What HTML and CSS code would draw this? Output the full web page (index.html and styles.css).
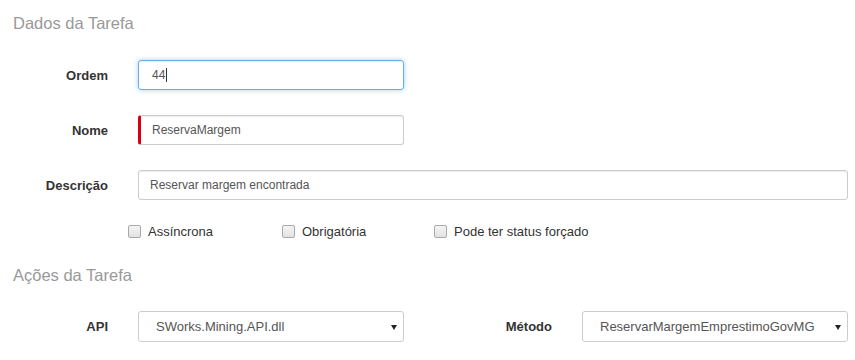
FILE: index.html
```html
<!DOCTYPE html>
<html lang="pt-BR">
<head>
  <meta charset="UTF-8" />
  <title>Tarefa</title>
  <link rel="stylesheet" href="styles.css">
</head>
<body>
  <form class="task-form">
    <h4 class="section-title">Dados da Tarefa</h4>

    <div class="form-row first">
      <label class="field-label" for="ordem">Ordem</label>
      <div class="field-box short focused" id="ordem">
        <span class="field-text">44</span><span class="caret"></span>
      </div>
    </div>

    <div class="form-row">
      <label class="field-label" for="nome">Nome</label>
      <input class="field short required" id="nome" type="text" value="ReservaMargem">
    </div>

    <div class="form-row">
      <label class="field-label" for="descricao">Descrição</label>
      <input class="field wide" id="descricao" type="text" value="Reservar margem encontrada">
    </div>

    <div class="checks">
      <label class="check"><input type="checkbox"> Assíncrona</label>
      <label class="check"><input type="checkbox"> Obrigatória</label>
      <label class="check"><input type="checkbox"> Pode ter status forçado</label>
    </div>

    <h4 class="section-title second">Ações da Tarefa</h4>

    <div class="split-row">
      <div class="form-row">
        <label class="field-label" for="api">API</label>
        <div class="select-wrap">
          <select class="select" id="api">
            <option>SWorks.Mining.API.dll</option>
          </select>
          <span class="arrow"></span>
        </div>
      </div>
      <div class="form-row">
        <label class="field-label" for="metodo">Método</label>
        <div class="select-wrap">
          <select class="select" id="metodo">
            <option>ReservarMargemEmprestimoGovMG</option>
          </select>
          <span class="arrow"></span>
        </div>
      </div>
    </div>
  </form>
</body>
</html>
```

FILE: styles.css
```css
body {
  margin: 0;
  font-family: "Liberation Sans", Arial, sans-serif;
  background-color: #ffffff;
  color: #333;
}

.task-form {
  display: flex;
  flex-direction: column;
  width: 855px;
}

.section-title {
  margin: 0;
  padding: 13px 0 0 13px;
  height: 48px;
  box-sizing: border-box;
  font-size: 16.5px;
  line-height: 20px;
  font-weight: normal;
  color: #999;
}

.section-title.second {
  margin-top: 9px;
  height: 59px;
}

.form-row {
  display: flex;
  align-items: center;
  margin-top: 25px;
}

.form-row.first {
  margin-top: 12px;
}

.field-label {
  width: 108px;
  margin-right: 30px;
  text-align: right;
  font-size: 13px;
  font-weight: bold;
  color: #333;
}

.field,
.field-box {
  height: 30px;
  box-sizing: border-box;
  border: 1px solid #ccc;
  border-radius: 3px;
  padding: 0 11px;
  font-family: inherit;
  font-size: 12px;
  color: #555;
  box-shadow: inset 0 1px 1px rgba(0,0,0,0.075);
  outline: none;
}

.short {
  width: 266px;
}

.wide {
  width: 710px;
}

.field-box {
  display: flex;
  align-items: center;
  padding-left: 13px;
}

.focused {
  border-color: #66afe9;
  box-shadow: inset 0 1px 1px rgba(0,0,0,0.075), 0 0 5px rgba(102,175,233,0.6);
}

.caret {
  display: inline-block;
  width: 1px;
  height: 14px;
  margin-left: 1px;
  background-color: #333;
}

.required {
  border-left: 3px solid #d9000d;
  padding-left: 11px;
}

.checks {
  display: flex;
  align-items: center;
  height: 24px;
  margin-top: 19px;
  padding-left: 128px;
}

.check {
  display: flex;
  align-items: center;
  font-size: 13px;
  color: #333;
}

.check:nth-child(1) { width: 154px; }
.check:nth-child(2) { width: 152px; }

.check input {
  appearance: none;
  -webkit-appearance: none;
  width: 13px;
  height: 13px;
  margin: 1px 7px 0 0;
  border: 1px solid #a9a9a9;
  border-radius: 2px;
  background: linear-gradient(#f4f4f4, #e2e2e2);
}

.split-row {
  display: flex;
  gap: 40px;
}

.split-row .form-row {
  margin: 0;
}

.select-wrap {
  position: relative;
  width: 266px;
}

.select {
  appearance: none;
  -webkit-appearance: none;
  display: block;
  width: 100%;
  height: 31px;
  border: 1px solid #ccc;
  border-radius: 3px;
  background-color: #fff;
  padding: 0 0 0 17px;
  font-family: inherit;
  font-size: 13px;
  color: #555;
  outline: none;
}

.arrow {
  position: absolute;
  right: 7px;
  top: 14px;
  width: 0;
  height: 0;
  border-left: 3px solid transparent;
  border-right: 3px solid transparent;
  border-top: 5px solid #222;
}
```
